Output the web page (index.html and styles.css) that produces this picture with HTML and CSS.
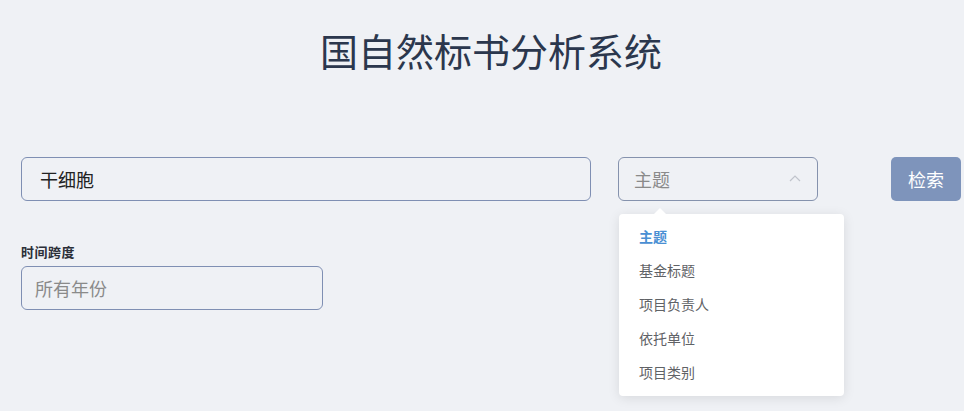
FILE: index.html
```html
<!DOCTYPE html>
<html lang="zh">
<head>
<meta charset="utf-8">
<title>国自然标书分析系统</title>
<link rel="stylesheet" href="styles.css">
</head>
<body>
<div class="page">
  <h1 class="title">国自然标书分析系统</h1>
  <div class="search-row">
    <div class="field main-input"><span class="value">干细胞</span></div>
    <div class="select-wrap">
      <div class="field select"><span class="placeholder">主题</span>
        <svg class="chevron" width="12" height="8" viewBox="0 0 12 8"><path d="M1 7 L6 2 L11 7" fill="none" stroke="#c0c4cc" stroke-width="1.2"/></svg>
      </div>
      <div class="dropdown">
        <span class="caret"></span>
        <ul class="options">
          <li class="option selected">主题</li>
          <li class="option">基金标题</li>
          <li class="option">项目负责人</li>
          <li class="option">依托单位</li>
          <li class="option">项目类别</li>
        </ul>
      </div>
    </div>
    <button class="btn">检索</button>
  </div>
  <div class="filter">
    <label class="label">时间跨度</label>
    <div class="field year-input"><span class="placeholder">所有年份</span></div>
  </div>
</div>
</body>
</html>
```
FILE: styles.css
```css
* { box-sizing: border-box; }
html, body { margin: 0; padding: 0; }
body {
  background: #eff1f5;
  font-family: "Noto Sans CJK SC", "Noto Sans", sans-serif;
  width: 964px;
  height: 411px;
  overflow: hidden;
}
.page { padding: 0 0 0 21px; }
.title {
  margin: 0 0 0 -3px;
  padding-top: 23px;
  height: 157px;
  text-align: center;
  font-weight: 400;
  font-size: 38px;
  line-height: 54px;
  color: #2b374d;
}
.search-row {
  display: flex;
  align-items: flex-start;
  height: 44px;
}
.field {
  border: 1px solid #7f8fb3;
  border-radius: 6px;
  height: 44px;
  display: flex;
  align-items: center;
  font-size: 18px;
  background: #eff1f5;
}
.main-input { width: 570px; padding-left: 18px; color: #222; }
.select-wrap { position: relative; margin-left: 27px; }
.select {
  width: 200px;
  padding: 0 16px 0 15px;
  justify-content: space-between;
  border-color: #8592ad;
}
.placeholder { color: #8a8a8a; }
.chevron { margin-top: -2px; }
.btn {
  margin-left: 73px;
  width: 70px;
  height: 44px;
  border: none;
  border-radius: 5px;
  background: #7e94bb;
  color: #fff;
  font-family: inherit;
  font-size: 18px;
  padding: 0;
}
.dropdown {
  position: absolute;
  top: 57px;
  left: 1px;
  width: 225px;
  background: #fff;
  border-radius: 4px;
  box-shadow: 0 2px 12px rgba(0, 0, 0, 0.1);
  z-index: 10;
}
.caret {
  position: absolute;
  top: -6px;
  left: 35px;
  width: 0;
  height: 0;
  border-left: 6px solid transparent;
  border-right: 6px solid transparent;
  border-bottom: 6px solid #fff;
}
.options { list-style: none; margin: 0; padding: 5px 0 7px; }
.option {
  height: 34px;
  line-height: 34px;
  padding: 0 20px;
  font-size: 14px;
  color: #5f6266;
}
.option.selected { color: #4a8fd3; font-weight: 700; }
.filter { margin-top: 41px; }
.label {
  display: block;
  font-size: 13px;
  font-weight: 700;
  color: #2b2f38;
  line-height: 19px;
  margin-bottom: 5px;
  letter-spacing: 0.5px;
}
.year-input { width: 302px; height: 44px; padding-left: 13px; }
```
